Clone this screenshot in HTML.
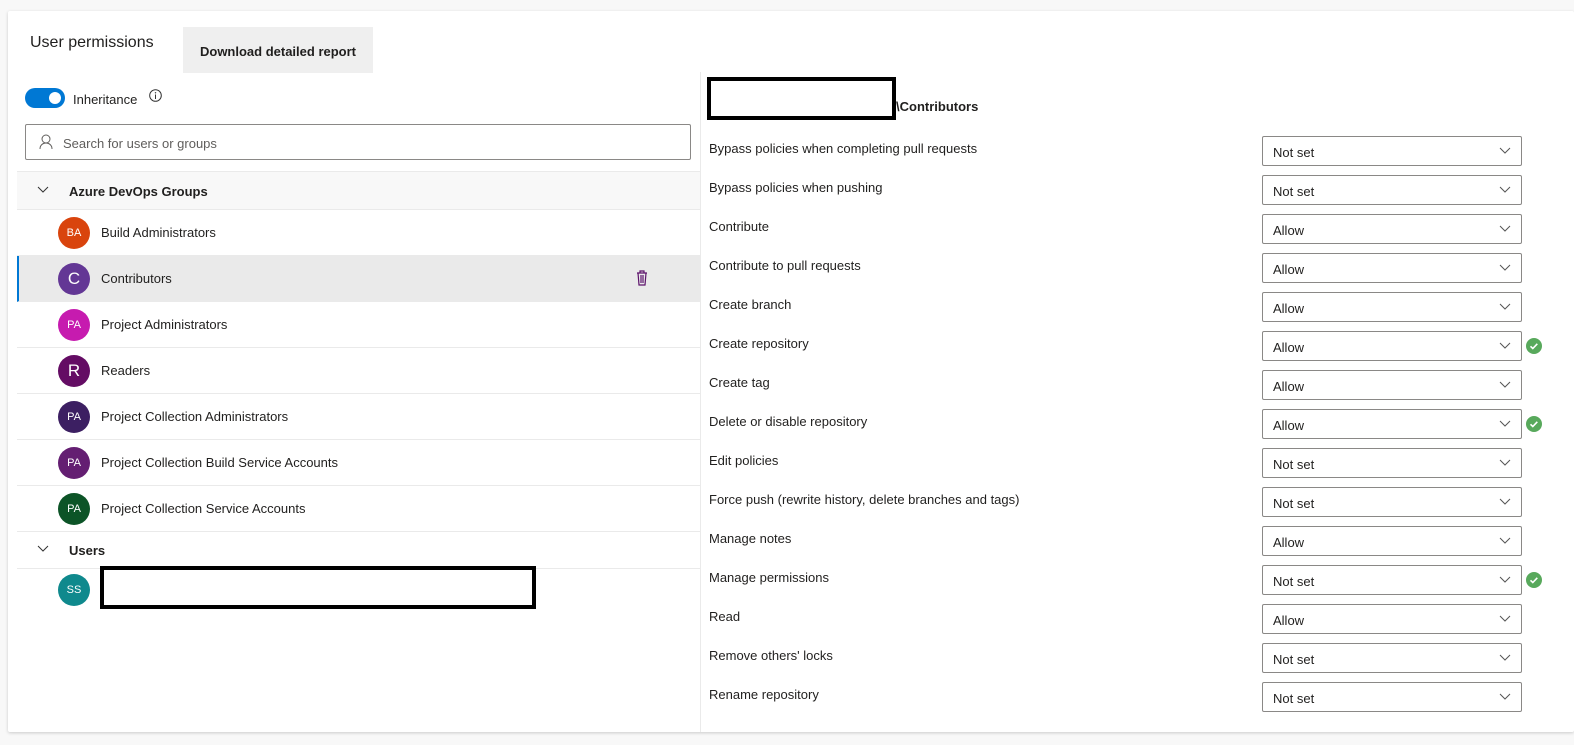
<!DOCTYPE html>
<html><head><meta charset="utf-8"><style>
*{box-sizing:border-box;margin:0;padding:0}
html,body{overflow:hidden}
body{width:1574px;height:745px;background:#f8f8f8;font-family:"Liberation Sans",sans-serif;color:#201f1e;position:relative;font-size:13px}
.card{position:absolute;left:8px;top:11px;width:1566px;height:721px;background:#fff;box-shadow:0 1px 3px rgba(0,0,0,.18);border-radius:2px}
.a{position:absolute}
.row{position:absolute;left:17px;width:683px;height:46px;border-bottom:1px solid #eaeaea}
.av{position:absolute;left:41px;top:7px;width:32px;height:32px;border-radius:50%;color:#fff;font-size:11px;text-align:center;line-height:32px;opacity:.95}
.nm{position:absolute;left:84px;top:15px;font-size:13px}
.lbl{position:absolute;left:709px;font-size:13px}
.dd{position:absolute;left:1262px;width:260px;height:30px;border:1px solid #8a8886;border-radius:2px;font-size:13px;padding:8px 0 0 10px}
.dd svg{position:absolute;right:10px;top:10px}
.ck{position:absolute;left:1526px;width:16px;height:16px;border-radius:50%;background:#58a95c}
</style></head><body>
<div class="card"></div>
<div class="a" style="left:30px;top:34px;font-size:16px">User permissions</div>
<div class="a" style="left:183px;top:27px;width:190px;height:46px;background:#efefef;font-size:13px;font-weight:bold;padding-top:17px;text-align:center">Download detailed report</div>
<div class="a" style="left:700px;top:72px;width:1px;height:660px;background:#eaeaea"></div>
<div class="a" style="left:25px;top:88px;width:40px;height:20px;border-radius:10px;background:#0078d4"><div style="position:absolute;right:4px;top:4px;width:12px;height:12px;border-radius:50%;background:#fff"></div></div>
<div class="a" style="left:73px;top:92px">Inheritance</div>
<svg class="a" style="left:149px;top:89px" width="13" height="13"><circle cx="6.5" cy="6.5" r="5.8" fill="none" stroke="#333" stroke-width="1"/><line x1="6.5" y1="5.5" x2="6.5" y2="10" stroke="#333"/><circle cx="6.5" cy="3.8" r=".7" fill="#333"/></svg>
<div class="a" style="left:25px;top:124px;width:666px;height:36px;border:1px solid #8a8886;border-radius:2px"></div>
<svg class="a" style="left:39px;top:134px" width="14" height="16"><circle cx="7" cy="5" r="4" fill="none" stroke="#605e5c"/><path d="M1 15c0-4 3-6 6-6s6 2 6 6" fill="none" stroke="#605e5c"/></svg>
<div class="a" style="left:63px;top:136px;color:#605e5c">Search for users or groups</div>
<div class="a" style="left:17px;top:171px;width:683px;height:39px;background:#f8f8f8;border-top:1px solid #eaeaea;border-bottom:1px solid #eaeaea"></div>
<svg class="a" style="left:37px;top:186px" width="12" height="8"><path d="M1 1l5 5 5-5" fill="none" stroke="#333"/></svg>
<div class="a" style="left:69px;top:184px;font-weight:bold">Azure DevOps Groups</div>
<div class="row" style="top:210px"><div class="av" style="background:#d83b01">BA</div><div class="nm">Build Administrators</div></div>
<div class="row" style="top:256px;background:#eaeaea;border-left:2px solid #0078d4"><div class="av" style="background:#5c2e91;font-size:17px;left:39px">C</div><div class="nm" style="left:82px">Contributors</div>
<svg style="position:absolute;left:617px;top:14px" width="12" height="16"><path d="M1 3h10M4 3V1h4v2M2 3l1 12h6l1-12M5 5v8M7 5v8" fill="none" stroke="#5c126b" stroke-width="1.2"/></svg></div>
<div class="row" style="top:302px"><div class="av" style="background:#c30fab">PA</div><div class="nm">Project Administrators</div></div>
<div class="row" style="top:348px"><div class="av" style="background:#5c005c;font-size:17px">R</div><div class="nm">Readers</div></div>
<div class="row" style="top:394px"><div class="av" style="background:#32145a">PA</div><div class="nm">Project Collection Administrators</div></div>
<div class="row" style="top:440px"><div class="av" style="background:#5c126b">PA</div><div class="nm">Project Collection Build Service Accounts</div></div>
<div class="row" style="top:486px"><div class="av" style="background:#004b1c">PA</div><div class="nm">Project Collection Service Accounts</div></div>
<div class="a" style="left:17px;top:568px;width:683px;height:1px;background:#eaeaea"></div>
<svg class="a" style="left:37px;top:545px" width="12" height="8"><path d="M1 1l5 5 5-5" fill="none" stroke="#333"/></svg>
<div class="a" style="left:69px;top:543px;font-weight:bold">Users</div>
<div class="av" style="left:58px;top:574px;background:#038387">SS</div>
<div class="a" style="left:100px;top:566px;width:436px;height:43px;border:4px solid #000"></div>
<div class="a" style="left:707px;top:77px;width:189px;height:43px;border:4px solid #000"></div>
<div class="a" style="left:896px;top:99px;font-weight:bold">\Contributors</div>
<div id="perm"></div>
<script>
var L=[["Bypass policies when completing pull requests","Not set"],["Bypass policies when pushing","Not set"],["Contribute","Allow"],["Contribute to pull requests","Allow"],["Create branch","Allow"],["Create repository","Allow",1],["Create tag","Allow"],["Delete or disable repository","Allow",1],["Edit policies","Not set"],["Force push (rewrite history, delete branches and tags)","Not set"],["Manage notes","Allow"],["Manage permissions","Not set",1],["Read","Allow"],["Remove others' locks","Not set"],["Rename repository","Not set"]];
var h="";L.forEach(function(r,i){var t=136+39*i;
h+='<div class="lbl" style="top:'+(t+5)+'px">'+r[0]+'</div><div class="dd" style="top:'+t+'px">'+r[1]+'<svg width="12" height="8"><path d="M1 1l5 5 5-5" fill="none" stroke="#555"/></svg></div>';
if(r[2])h+='<div class="ck" style="top:'+(t+7)+'px"><svg width="16" height="16"><path d="M4.5 8.3l2.3 2.2 4.5-4.7" fill="none" stroke="#fff" stroke-width="1.6"/></svg></div>';});
document.getElementById("perm").innerHTML=h;
</script>
</body></html>
